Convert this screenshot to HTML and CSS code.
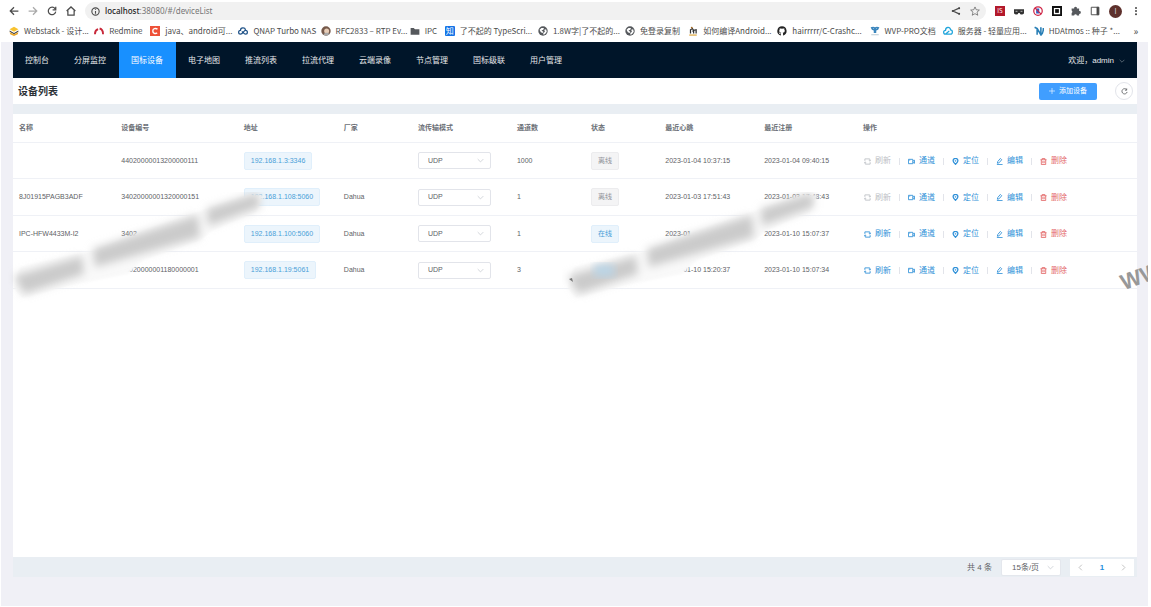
FILE: index.html
```
<!DOCTYPE html>
<html lang="zh-CN">
<head>
<meta charset="utf-8">
<title>设备列表</title>
<link rel="stylesheet" href="styles.css">
</head>
<body>
<svg class="defs" aria-hidden="true">
  <symbol id="down" viewBox="0 0 10 10"><path d="M1 3l4 4 4-4"/></symbol>
  <symbol id="refresh" viewBox="0 0 16 16"><path d="M2 6.500V2h11l1 4M14 9.500V14H3L2 10M11 5.500L14 7l2-2M0 11l2-2 3 1.500"/></symbol>
  <symbol id="camera" viewBox="0 0 16 16"><path d="M1 3h10v10H1zM11 7l4-2v7l-4-2M3 5h2"/></symbol>
  <symbol id="pin" viewBox="0 0 16 16"><path stroke-width="3" d="M8 14.500C4 10.500 2.500 9 2.500 6.500a5.500 5.500 0 0 1 11 0C13.500 9 12 10.500 8 14.500z"/><circle cx="8" cy="6.500" r="1"/></symbol>
  <symbol id="edit" viewBox="0 0 16 16"><path d="M3 12l1-4 6-7 3 3-6 7zM2 15h13"/></symbol>
  <symbol id="trash" viewBox="0 0 16 16"><path d="M1 4h14M5 4V1h6v3M3 4v11h10V4M6.500 7v5M9.500 7v5"/></symbol>
  <symbol id="globe" viewBox="0 0 16 16"><circle cx="8" cy="8" r="7.500" fill="#55585c" stroke="none"/><path fill="#fff" stroke="none" d="M2.500 6l3-3 4 0-1 3-3 1 3 2-1 2-3-1zM10 6l3-1 1 4-3 4-3 .5 1-3 2-1z"/></symbol>
  <symbol id="smear" viewBox="0 0 262 120">
    <path class="veil" filter="url(#edge)" d="M12 75l75-17 50-20L242 2l14 1-8 17-43 18-13 10-57 20-15 14-65 13-41 11-8-10z"/>
    <g filter="url(#soft)"><path class="gray" d="M6 84l68-20 2 18-60 20zM85 57l105-34 2 22-105 30zM199 17l51-16 2 14-52 19z"/></g>
  </symbol>
  <filter id="soft" x="-20%" y="-20%" width="140%" height="140%"><feGaussianBlur stdDeviation="4"/></filter>
  <filter id="edge"><feGaussianBlur stdDeviation="1"/></filter>
</svg>

<header class="browser">
  <div class="toolbar">
    <button class="tool" aria-label="后退"><svg viewBox="0 0 16 16"><path d="M15 8H2M8 2L2 8l6 6"/></svg></button>
    <button class="tool faded" aria-label="前进"><svg viewBox="0 0 16 16"><path d="M1 8h13M8 2l6 6-6 6"/></svg></button>
    <button class="tool" aria-label="重新加载"><svg viewBox="0 0 16 16"><path d="M13 4.500A6 6 0 1 0 14 9M14 1v5H9"/></svg></button>
    <button class="tool" aria-label="主页"><svg viewBox="0 0 16 16"><path d="M1 8l7-6.500L15 8M3 7v7.500h10V7"/></svg></button>
    <div class="omnibox">
      <svg class="info" viewBox="0 0 16 16"><circle cx="8" cy="8" r="6.500"/><path d="M8 7v5M8 4v1.500"/></svg>
      <span class="url"><b>localhost</b>:38080/#/deviceList</span>
      <button class="tool" aria-label="分享"><svg viewBox="0 0 16 16"><path d="M14 3L3 8l11 5"/><g fill="#444" stroke="none"><circle cx="13" cy="3.500" r="1.600"/><circle cx="3" cy="8" r="1.600"/><circle cx="13" cy="12.500" r="1.600"/></g></svg></button>
      <button class="tool star" aria-label="收藏"><svg viewBox="0 0 16 16"><path d="M8 1.500l2 4.500 5 .5-3.800 3.300 1.200 5L8 12.200l-4.400 2.600 1.200-5L1 6.500 6 6z"/></svg></button>
    </div>
    <div class="extensions">
      <span class="ext red">IS</span>
      <svg viewBox="0 0 16 16"><path fill="#333" stroke="none" d="M0 5h16v5a3.500 3 0 0 1-7 1H7a3.500 3 0 0 1-7-1z"/><path stroke="#fff" d="M2.500 8.500h3M10.500 8.500h3"/></svg>
      <svg viewBox="0 0 16 16"><circle cx="8" cy="8" r="6.800" fill="#fff" stroke="#cf2647" stroke-width="2"/><path fill="#2f62c8" stroke="none" d="M5 4h5v8H5z"/><path stroke="#cf2647" stroke-width="2" d="M3 3l10 10"/></svg>
      <svg viewBox="0 0 16 16"><path fill="#fff" stroke="#111" stroke-width="3" d="M1.500 1.500h13v13h-13z"/><path fill="#111" stroke="none" d="M5 5h6v6H5z"/></svg>
      <svg viewBox="0 0 16 16"><path fill="#55585c" stroke="none" d="M1 4h4a2.300 2.300 0 1 1 4.500 0H13v4a2.300 2.300 0 1 1 0 4.500V15H9.500a2.300 2.300 0 0 0-4.500 0H1v-4a2.300 2.300 0 0 0 0-4z"/></svg>
      <svg viewBox="0 0 16 16"><path stroke-width="1.500" d="M2 2h12v12H2z"/><path fill="#444" d="M11 2h3v12h-3z"/></svg>
      <span class="avatar">I</span>
      <svg viewBox="0 0 16 16"><g fill="#444" stroke="none"><circle cx="8" cy="3" r="1.600"/><circle cx="8" cy="8" r="1.600"/><circle cx="8" cy="13" r="1.600"/></g></svg>
    </div>
  </div>
  <nav class="bookmarks" aria-label="书签">
    <a href="#"><svg viewBox="0 0 16 16"><path fill="#f8c22f" stroke="none" d="M8 1l7 4-7 4-7-4z"/><path fill="#444" stroke="none" d="M1 7l7 4 7-4v2l-7 4-7-4z"/><path fill="#e9a425" stroke="none" d="M1 10l7 3 7-3-1 3-6 3-6-3z"/></svg><span>Webstack - 设计...</span></a>
    <a href="#"><svg viewBox="0 0 16 16"><path stroke="#c8283a" stroke-width="3" d="M1.500 13c0-4 2-7 5-8M9 4c4 1 5.500 4 5.500 9"/></svg><span>Redmine</span></a>
    <a href="#"><svg viewBox="0 0 16 16"><path fill="#ee5138" stroke="none" d="M0 0h16v16H0z"/><path stroke="#fff" stroke-width="2.200" d="M12 5C9 3 4.500 4 4.500 8s4 5 7 3"/></svg><span>java、android可...</span></a>
    <a href="#"><svg viewBox="0 0 16 16"><path stroke="#1f5288" stroke-width="2" d="M12 6C11 2 4 2 4 7c-4 0-4 6 0 6 4 0 5-6 8-6 4 0 4 6 0 6-3 0-4-4-6-4"/></svg><span>QNAP Turbo NAS</span></a>
    <a href="#"><svg viewBox="0 0 16 16"><circle cx="8" cy="8" r="7.500" fill="#76594a" stroke="none"/><circle cx="9" cy="8" r="4" fill="#e8cdb7" stroke="none"/><path fill="#aaa" stroke="none" d="M4 14c1-4 8-4 9-1-3 3-6 3-9 1z"/></svg><span>RFC2833 – RTP Ev...</span></a>
    <a href="#"><svg viewBox="0 0 16 16"><path fill="#55585c" stroke="none" d="M1 3h5l2 2h7v9H1z"/></svg><span>IPC</span></a>
    <a href="#"><i class="zhi">知</i><span>了不起的 TypeScri...</span></a>
    <a href="#"><svg><use href="#globe"/></svg><span>1.8W字|了不起的...</span></a>
    <a href="#"><svg><use href="#globe"/></svg><span>免登录复制</span></a>
    <a href="#"><svg viewBox="0 0 16 16"><path stroke="#333" stroke-width="2" d="M4 12V6l3-2 2 3v5M9 7l4-1v6M7 8h2"/><circle cx="6" cy="2.500" r="1.500" fill="#a66b22" stroke="none"/><path stroke="#dfa943" stroke-width="2" d="M2 14.500h12"/></svg><span>如何编译Android...</span></a>
    <a href="#"><svg viewBox="0 0 16 16"><path fill="#222" stroke="none" d="M8 .5a7.500 7.500 0 0 0-2.400 14.600c.4 0 .5-.2.500-.5v-1.800c-2 .4-2.600-.9-2.800-1.400-.4-.7-.8-.8-.4-1 1-.2 1.400 1 1.800 1.300.6.500 1.200.2 1.600.1.100-.5.300-.8.500-1C4.500 10.500 3.600 9.300 3.600 7.500c0-.8.300-1.500.8-2-.2-.6-.2-1.300.1-2 .8 0 1.500.4 2 .8a7 7 0 0 1 3 0c.6-.4 1.200-.8 2-.8.300.7.300 1.400.1 2 .5.500.8 1.200.8 2 0 1.900-1 3-3.200 3.300.4.300.5.800.5 1.500v2.300c0 .3.100.5.500.5A7.500 7.500 0 0 0 8 .5z"/></svg><span>hairrrrr/C-Crashc...</span></a>
    <a href="#"><svg viewBox="0 0 16 16"><path fill="#3b86bd" stroke="none" d="M1 2l4-1 3 1 3-1 4 1-2 4-3 1v4H6V7L3 6z"/><path stroke="#fff" d="M5 4h1M10 4h1"/><path stroke="#90aab8" d="M2 14h12"/></svg><span>WVP-PRO文档</span></a>
    <a href="#"><svg viewBox="0 0 16 16"><path stroke="#20a5db" stroke-width="2" d="M4 13C0 13 0 7 4 7c0-6 8-6 8-1 4 0 4 7 0 7H4l6-5"/></svg><span>服务器 - 轻量应用...</span></a>
    <a href="#"><svg viewBox="0 0 16 16"><path stroke="#297fb6" stroke-width="2.500" d="M1 2l4 2v10M5 4l6 10V2M11 14c4-2 4-6 4-11"/></svg><span>HDAtmos :: 种子 *...</span></a>
    <button class="more" aria-label="更多书签">»</button>
  </nav>
</header>

<div class="app">
  <header class="menu">
    <nav>
      <a href="#">控制台</a><a href="#">分屏监控</a><a href="#" class="active">国标设备</a><a href="#">电子地图</a><a href="#">推流列表</a><a href="#">拉流代理</a><a href="#">云端录像</a><a href="#">节点管理</a><a href="#">国标级联</a><a href="#">用户管理</a>
    </nav>
    <button class="user">欢迎，admin <svg><use href="#down"/></svg></button>
  </header>
  <section class="heading">
    <h1>设备列表</h1>
    <button class="add"><svg viewBox="0 0 10 10"><path d="M5 0v10M0 5h10"/></svg>添加设备</button>
    <button class="reload" aria-label="刷新列表"><svg viewBox="0 0 16 16"><path d="M13 4a6 6 0 1 0 1 5M13 1v4h-4"/></svg></button>
  </section>
  <main class="panel">
    <table>
      <colgroup><col class="c-name"><col class="c-id"><col class="c-addr"><col class="c-vendor"><col class="c-mode"><col class="c-count"><col class="c-state"><col class="c-time"><col class="c-time"><col></colgroup>
      <thead><tr><th>名称</th><th>设备编号</th><th>地址</th><th>厂家</th><th>流传输模式</th><th>通道数</th><th>状态</th><th>最近心跳</th><th>最近注册</th><th>操作</th></tr></thead>
      <tbody>
        <tr>
          <td></td><td>44020000013200000111</td><td><span class="tag">192.168.1.3:3346</span></td><td></td>
          <td><label class="pick"><select aria-label="流传输模式"><option>UDP</option><option>TCP</option></select><svg><use href="#down"/></svg></label></td>
          <td>1000</td><td><span class="tag off">离线</span></td><td>2023-01-04 10:37:15</td><td>2023-01-04 09:40:15</td>
          <td><div class="ops"><button disabled><svg><use href="#refresh"/></svg>刷新</button><button><svg><use href="#camera"/></svg>通道</button><button><svg><use href="#pin"/></svg>定位</button><button><svg><use href="#edit"/></svg>编辑</button><button class="danger"><svg><use href="#trash"/></svg>删除</button></div></td>
        </tr>
        <tr>
          <td>8J01915PAGB3ADF</td><td>34020000001320000151</td><td><span class="tag">192.168.1.108:5060</span></td><td>Dahua</td>
          <td><label class="pick"><select aria-label="流传输模式"><option>UDP</option><option>TCP</option></select><svg><use href="#down"/></svg></label></td>
          <td>1</td><td><span class="tag off">离线</span></td><td>2023-01-03 17:51:43</td><td>2023-01-03 17:48:43</td>
          <td><div class="ops"><button disabled><svg><use href="#refresh"/></svg>刷新</button><button><svg><use href="#camera"/></svg>通道</button><button><svg><use href="#pin"/></svg>定位</button><button><svg><use href="#edit"/></svg>编辑</button><button class="danger"><svg><use href="#trash"/></svg>删除</button></div></td>
        </tr>
        <tr>
          <td>IPC-HFW4433M-I2</td><td>3402</td><td><span class="tag">192.168.1.100:5060</span></td><td>Dahua</td>
          <td><label class="pick"><select aria-label="流传输模式"><option>UDP</option><option>TCP</option></select><svg><use href="#down"/></svg></label></td>
          <td>1</td><td><span class="tag">在线</span></td><td>2023-01</td><td>2023-01-10 15:07:37</td>
          <td><div class="ops"><button><svg><use href="#refresh"/></svg>刷新</button><button><svg><use href="#camera"/></svg>通道</button><button><svg><use href="#pin"/></svg>定位</button><button><svg><use href="#edit"/></svg>编辑</button><button class="danger"><svg><use href="#trash"/></svg>删除</button></div></td>
        </tr>
        <tr>
          <td></td><td>34020000001180000001</td><td><span class="tag">192.168.1.19:5061</span></td><td>Dahua</td>
          <td><label class="pick"><select aria-label="流传输模式"><option>UDP</option><option>TCP</option></select><svg><use href="#down"/></svg></label></td>
          <td>3</td><td></td><td>2023-01-10 15:20:37</td><td>2023-01-10 15:07:34</td>
          <td><div class="ops"><button><svg><use href="#refresh"/></svg>刷新</button><button><svg><use href="#camera"/></svg>通道</button><button><svg><use href="#pin"/></svg>定位</button><button><svg><use href="#edit"/></svg>编辑</button><button class="danger"><svg><use href="#trash"/></svg>删除</button></div></td>
        </tr>
      </tbody>
    </table>
  </main>
  <footer class="pager">
    <span>共 4 条</span>
    <label class="pick size"><select aria-label="每页条数"><option>15条/页</option><option>30条/页</option></select><svg><use href="#down"/></svg></label>
    <div class="pages"><button aria-label="上一页"><svg viewBox="0 0 10 10"><path d="M7 1L3 5l4 4"/></svg></button><button class="current">1</button><button aria-label="下一页"><svg viewBox="0 0 10 10"><path d="M3 1l4 4-4 4"/></svg></button></div>
  </footer>

  <svg class="smudge" aria-hidden="true"><use href="#smear"/></svg>
  <svg class="smudge second" viewBox="0 0 262 120" aria-hidden="true"><use href="#smear"/><path class="blue" filter="url(#soft)" d="M32 73h20v11H32z"/><path fill="#777" d="M7 87l3-1 1 4z"/></svg>
  <div class="watermark" aria-hidden="true">WW</div>
</div>
</body>
</html>
```
FILE: styles.css
```
* { box-sizing: border-box; }
body {
  margin: 0;
  padding: 0 3px 1px 1px;
  min-height: 100vh;
  display: flex;
  flex-direction: column;
  background: #fff;
  color: #606266;
  font: 7px/10px "Liberation Sans", "Noto Sans CJK SC", sans-serif;
}
button, select { font: inherit; color: inherit; border: 0; background: none; padding: 0; margin: 0; }
a { color: inherit; text-decoration: none; }
svg { fill: none; stroke: currentColor; flex: none; }
.defs { position: absolute; width: 0; height: 0; }

.browser { color: #4c4c4c; padding-top: 2px; font-family: "Noto Sans CJK SC", sans-serif; }
.toolbar { display: flex; align-items: center; height: 18px; padding: 0 7px 0 8px; gap: 9px; }
.tool { width: 10px; height: 10px; display: flex; }
.tool svg { width: 10px; height: 10px; stroke-width: 2; }
.faded { color: #aaa; }
.omnibox { flex: 1; display: flex; align-items: center; height: 18px; gap: 9px; padding: 0 6px; border-radius: 9px; background: #f1f1f1; }
.info { width: 9px; height: 9px; stroke-width: 2; margin-right: -4px; }
.url { flex: 1; font: 8px/10px "Noto Sans", sans-serif; color: #777; }
.url b { font-weight: 500; color: #222; }
.star svg { stroke-width: 1; }
.extensions { display: flex; align-items: center; gap: 9px; }
.extensions svg { width: 10px; height: 10px; stroke-width: 1; }
.ext { width: 10px; height: 10px; background: #b3192b; color: #fff; font-size: 6px; text-align: center; }
.avatar { width: 13px; height: 13px; line-height: 13px; border-radius: 50%; background: #5d302c; color: #ddd; text-align: center; }
.bookmarks {
  display: grid;
  grid-template-columns: 85fr 56fr 88fr 82fr 89fr 35fr 93fr 87fr 63fr 89fr 92fr 73fr 91fr 98fr 8fr;
  align-items: center;
  height: 22px;
  padding: 0 8px;
  font-size: 8px;
}
.bookmarks a { display: flex; align-items: center; gap: 5px; white-space: nowrap; min-width: 0; }
.bookmarks svg { width: 10px; height: 10px; }
.zhi { width: 10px; height: 10px; background: #1473e6; color: #fff; border-radius: 1px; font-style: normal; text-align: center; }
.more { font-size: 10px; }

.app { position: relative; flex: 1; display: flex; flex-direction: column; padding: 0 11px 29px 12px; background: #f0f0f6; overflow: hidden; }
.menu { display: flex; justify-content: space-between; height: 36px; background: #001529; color: #e6e8ea; font-size: 8px; }
.menu nav { display: flex; }
.menu nav a { display: flex; align-items: center; padding: 1px 13px 0 12px; }
.menu nav .active { background: #1890ff; color: #fff; }
.user { display: flex; align-items: center; gap: 5px; padding: 1px 12px 0 0; font-size: 8px; }
.user svg { width: 6px; height: 6px; opacity: .6; }
.heading { display: flex; align-items: center; height: 26px; padding: 0 4px 0 5px; background: #fff; }
h1 { margin: 0 auto 0 0; padding-top: 2px; font-size: 10px; color: #2c3035; }
.add { display: flex; align-items: center; justify-content: center; gap: 4px; width: 58px; height: 17px; border-radius: 2px; background: #409eff; color: #fff; }
.add svg { width: 6px; height: 6px; }
.reload { display: flex; align-items: center; justify-content: center; width: 18px; height: 18px; margin-left: 18px; border: 1px solid #e2e4ea; border-radius: 50%; }
.reload svg { width: 7px; height: 7px; stroke-width: 2; }

.panel { flex: 1; background: #fff; margin-top: 10px; box-shadow: 0 -10px #e9eef3; }
table { width: 100%; table-layout: fixed; border-spacing: 0; }
.c-name { width: 9.1%; }
.c-id { width: 10.9%; }
.c-addr { width: 8.9%; }
.c-vendor, .c-count, .c-state { width: 6.6%; }
.c-mode, .c-time { width: 8.8%; }
th, td { padding: 0 0 0 6px; border-bottom: 1px solid #eff1f6; text-align: left; white-space: nowrap; }
th { height: 29px; color: #6b6f76; }
td { height: 36px; }
tr:nth-child(even) td { height: 37px; }
.tag { display: inline-block; height: 18px; line-height: 16px; padding: 0 6px; border: 1px solid #e0effb; border-radius: 2px; background: #ecf5fc; color: #4a9fd8; vertical-align: middle; }
.off { border-color: #ececee; background: #f4f4f5; color: #909399; }
.pick { position: relative; display: block; width: 73px; }
.pick select { appearance: none; display: block; width: 100%; height: 17px; padding: 0 9px; border: 1px solid #e2e4ea; border-radius: 2px; background: #fff; }
.pick svg { position: absolute; right: 7px; top: 5px; width: 7px; height: 7px; color: #c0c4cc; pointer-events: none; }
.ops { display: flex; align-items: center; padding: 1px 0 0 1px; font-size: 8px; color: #3191d8; }
.ops button { display: flex; align-items: center; gap: 4px; }
.ops button + button::before { content: ""; width: 1px; height: 7px; margin: 0 4px 0 8px; background: #e2e4ea; }
.ops svg { width: 7px; height: 7px; stroke-width: 2; }
.ops button:disabled { color: #bdc0c5; }
.ops .danger { color: #e46a6a; }

.pager { display: flex; align-items: center; justify-content: flex-end; height: 20px; gap: 9px; padding: 1px 3px 0 0; background: #e9eef3; font-size: 8px; }
.size { width: 60px; }
.size select { padding: 0 10px; border-color: #e4e7ed; }
.pages { display: flex; justify-content: space-between; width: 64px; height: 17px; background: #fff; }
.pages button { flex: 1; display: flex; align-items: center; justify-content: center; color: #aaa; }
.pages .current { color: #2590dd; font-weight: bold; }
.pages svg { width: 7px; height: 7px; }

.smudge { position: absolute; left: 7px; top: 150px; width: 262px; height: 120px; stroke: none; pointer-events: none; }
.second { left: 561px; }
.veil { fill: #f9f9f9; }
.gray { fill: #cbcbcb; }
.blue { fill: #b9d5e8; }
.watermark { position: absolute; right: -19px; top: 230px; transform: rotate(-20deg); transform-origin: 0 100%; font: bold 22px/22px "Liberation Sans", sans-serif; color: #989898; pointer-events: none; }
```
